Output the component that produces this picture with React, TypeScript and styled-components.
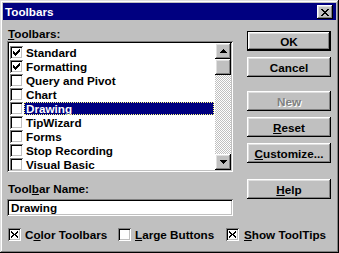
import React from "react";
import styled, { createGlobalStyle, css } from "styled-components";

const Global = createGlobalStyle`
  html, body { margin: 0; padding: 0; background: #c0c0c0; }
  * { box-sizing: border-box; }
`;

const raised = css`
  background: #c0c0c0;
  box-shadow: inset -1px -1px #000, inset 1px 1px #fff, inset -2px -2px #808080, inset 2px 2px #dfdfdf;
`;

const sunken = css`
  box-shadow: inset 1px 1px #808080, inset -1px -1px #fff, inset 2px 2px #000, inset -2px -2px #c0c0c0;
`;

const Window = styled.div`
  width: 339px;
  height: 253px;
  background: #c0c0c0;
  padding: 3px;
  box-shadow: inset -1px -1px #000, inset 1px 1px #dfdfdf, inset -2px -2px #808080, inset 2px 2px #fff;
  display: flex;
  flex-direction: column;
  font: bold 11.7px "Liberation Sans", Arial, sans-serif;
  color: #000;
`;

const TitleBar = styled.div`
  height: 17px;
  background: #000080;
  color: #fff;
  display: flex;
  align-items: center;
  justify-content: space-between;
  padding: 0 3px 0 2px;
  line-height: 17px;
`;

const CloseButton = styled.div`
  ${raised};
  width: 16px;
  height: 14px;
  margin-top: 1px;
  display: flex;
  align-items: center;
  justify-content: center;
`;

const Body = styled.div`
  display: flex;
  gap: 14px;
  padding: 7px 0 0 4px;
`;

const LeftCol = styled.div`
  width: 226px;
  display: flex;
  flex-direction: column;
`;

const RightCol = styled.div`
  width: 84px;
  display: flex;
  flex-direction: column;
  gap: 6px;
  padding-top: 4px;
`;

const FieldLabel = styled.div<{ $space?: number }>`
  line-height: 14px;
  height: 14px;
  padding-left: 1px;
  margin-top: ${(p) => p.$space ?? 0}px;
  white-space: nowrap;
`;

const ListBox = styled.div`
  ${sunken};
  background: #fff;
  height: 131px;
  padding: 2px;
  display: flex;
`;

const ListItems = styled.div`
  flex: 1;
  padding-top: 2px;
  overflow: hidden;
  display: flex;
  flex-direction: column;
`;

const Row = styled.div`
  height: 14px;
  flex-shrink: 0;
  display: flex;
  align-items: center;
`;

const Box = styled.div<{ $inList?: boolean }>`
  ${sunken};
  background: #fff;
  width: 13px;
  height: 13px;
  flex-shrink: 0;
  margin-left: ${(p) => (p.$inList ? 1 : 0)}px;
  display: flex;
  align-items: center;
  justify-content: center;
`;

const ItemText = styled.div<{ $selected?: boolean }>`
  flex: 1;
  height: 13px;
  line-height: 13px;
  margin: 0 1px 0 1px;
  padding-left: 2px;
  white-space: nowrap;
  ${(p) =>
    p.$selected &&
    css`
      background: #000080;
      color: #fff;
      outline: 1px dotted #ffff80;
      outline-offset: -1px;
    `}
`;

const ScrollBar = styled.div`
  width: 16px;
  display: flex;
  flex-direction: column;
`;

const ScrollBtn = styled.div`
  ${raised};
  width: 16px;
  height: 16px;
  flex-shrink: 0;
  display: flex;
  align-items: center;
  justify-content: center;
`;

const Track = styled.div`
  flex: 1;
  background-color: #c0c0c0;
  background-image: conic-gradient(#fff 25%, #c0c0c0 0 50%, #fff 0 75%, #c0c0c0 0);
  background-size: 2px 2px;
`;

const TextInput = styled.div`
  ${sunken};
  background: #fff;
  margin-top: 3px;
  height: 17px;
  padding: 2px 4px;
  line-height: 13px;
  font-weight: bold;
`;

const Button = styled.div<{ $default?: boolean; $disabled?: boolean; $space?: number }>`
  width: 84px;
  height: 20px;
  flex-shrink: 0;
  display: flex;
  align-items: center;
  justify-content: center;
  background: #c0c0c0;
  margin-top: ${(p) => p.$space ?? 0}px;
  box-shadow: ${(p) =>
    p.$default
      ? "inset 0 0 0 1px #000, inset -2px -2px #000, inset 2px 2px #fff, inset -3px -3px #808080, inset 3px 3px #dfdfdf"
      : "inset -1px -1px #000, inset 1px 1px #fff, inset -2px -2px #808080, inset 2px 2px #dfdfdf"};
  color: ${(p) => (p.$disabled ? "#808080" : "#000")};
  text-shadow: ${(p) => (p.$disabled ? "1px 1px #fff" : "none")};
  white-space: nowrap;
`;

const CheckRow = styled.div`
  display: grid;
  grid-template-columns: 110px 108px auto;
  padding-left: 5px;
  margin-top: 12px;
`;

const CheckItem = styled.div`
  display: flex;
  align-items: center;
  height: 13px;
`;

const CheckLabel = styled.span<{ $gap?: number }>`
  margin-left: ${(p) => p.$gap ?? 4}px;
  line-height: 13px;
  white-space: nowrap;
`;

const Pixels: React.FC<{ rows: string[] }> = ({ rows }) => (
  <svg
    width={rows[0].length}
    height={rows.length}
    viewBox={`0 0 ${rows[0].length} ${rows.length}`}
    shapeRendering="crispEdges"
  >
    {rows.flatMap((r, y) =>
      r.split("").map((c, x) =>
        c === "X" ? <rect key={`${x}-${y}`} x={x} y={y} width={1} height={1} fill="#000" /> : null
      )
    )}
  </svg>
);

const CHECK = ["......X", ".....XX", "X...XXX", "XX.XXX.", "XXXXX..", ".XXX...", "..X...."];
const CROSS = ["XX....XX", ".XX..XX.", "..XXXX..", "...XX...", "..XXXX..", ".XX..XX.", "XX....XX"];
const CROSS7 = ["X.....X", "XX...XX", ".XX.XX.", "..XXX..", ".XX.XX.", "XX...XX", "X.....X"];
const UP = ["...X...", "..XXX..", ".XXXXX.", "XXXXXXX"];
const DOWN = [...UP].reverse();

const items: { name: string; checked: boolean; selected?: boolean }[] = [
  { name: "Standard", checked: true },
  { name: "Formatting", checked: true },
  { name: "Query and Pivot", checked: false },
  { name: "Chart", checked: false },
  { name: "Drawing", checked: false, selected: true },
  { name: "TipWizard", checked: false },
  { name: "Forms", checked: false },
  { name: "Stop Recording", checked: false },
  { name: "Visual Basic", checked: false },
];

export default function App() {
  return (
    <>
      <Global />
      <Window>
        <TitleBar>
          <span>Toolbars</span>
          <CloseButton>
            <Pixels rows={CROSS} />
          </CloseButton>
        </TitleBar>
        <Body>
          <LeftCol>
            <FieldLabel>
              <u>T</u>oolbars:
            </FieldLabel>
            <ListBox>
              <ListItems>
                {items.map((it) => (
                  <Row key={it.name}>
                    <Box $inList>{it.checked && <Pixels rows={CHECK} />}</Box>
                    <ItemText $selected={it.selected}>{it.name}</ItemText>
                  </Row>
                ))}
              </ListItems>
              <ScrollBar>
                <ScrollBtn>
                  <Pixels rows={UP} />
                </ScrollBtn>
                <ScrollBtn />
                <Track />
                <ScrollBtn>
                  <Pixels rows={DOWN} />
                </ScrollBtn>
              </ScrollBar>
            </ListBox>
            <FieldLabel $space={10}>
              Tool<u>b</u>ar Name:
            </FieldLabel>
            <TextInput>Drawing</TextInput>
          </LeftCol>
          <RightCol>
            <Button $default>OK</Button>
            <Button>Cancel</Button>
            <Button $disabled $space={8}>New</Button>
            <Button>
              <u>R</u>eset
            </Button>
            <Button>
              <u>C</u>ustomize...
            </Button>
            <Button $space={10}>
              <u>H</u>elp
            </Button>
          </RightCol>
        </Body>
        <CheckRow>
          <CheckItem>
            <Box>
              <Pixels rows={CROSS7} />
            </Box>
            <CheckLabel>
              C<u>o</u>lor Toolbars
            </CheckLabel>
          </CheckItem>
          <CheckItem>
            <Box />
            <CheckLabel>
              <u>L</u>arge Buttons
            </CheckLabel>
          </CheckItem>
          <CheckItem>
            <Box>
              <Pixels rows={CROSS7} />
            </Box>
            <CheckLabel $gap={5}>
              <u>S</u>how ToolTips
            </CheckLabel>
          </CheckItem>
        </CheckRow>
      </Window>
    </>
  );
}
